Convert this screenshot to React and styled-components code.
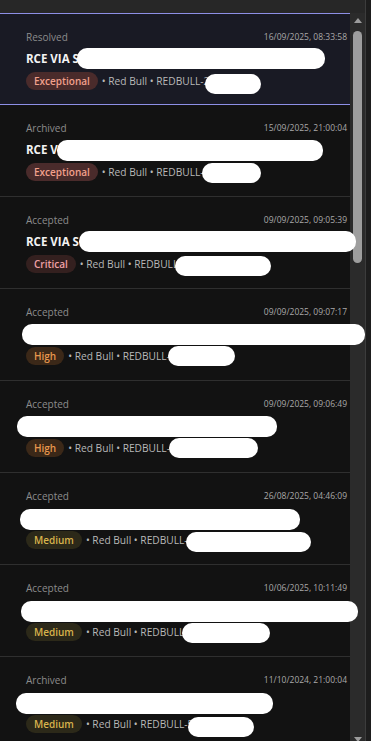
import React from 'react';
import styled, { createGlobalStyle } from 'styled-components';

const GlobalStyle = createGlobalStyle`
  html, body {
    margin: 0;
    padding: 0;
    background: #121212;
    overflow: hidden;
  }
  body {
    font-family: "Open Sans", "Noto Sans", sans-serif;
  }
`;

const Page = styled.div`
  display: flex;
  width: 371px;
  height: 741px;
  overflow: hidden;
`;

const Main = styled.div`
  display: flex;
  flex-direction: column;
  width: 365px;
`;

const TopBar = styled.div`
  height: 13px;
  flex-shrink: 0;
  background: #272727;
`;

const Body = styled.div`
  display: flex;
  flex: 1;
  min-height: 0;
`;

const List = styled.div`
  width: 350px;
  flex-shrink: 0;
  background: #121212;
`;

const Edge = styled.div`
  width: 6px;
  border-left: 1px solid #3c3c3c;
  box-sizing: border-box;
  background: #1d1d1d;
`;

const ScrollTrack = styled.div`
  width: 15px;
  background: #2b2b2b;
  display: flex;
  flex-direction: column;
  align-items: center;
  padding-top: 5px;
  box-sizing: border-box;
`;

const Arrow = styled.div`
  width: 0;
  height: 0;
  border-left: 4.5px solid transparent;
  border-right: 4.5px solid transparent;
  ${p => (p.$down ? 'border-top: 5px solid #9c9c9c;' : 'border-bottom: 5px solid #9c9c9c;')}
`;

const Thumb = styled.div`
  width: 9px;
  height: 232px;
  margin-top: 8px;
  border-radius: 5px;
  background: #9e9e9e;
`;

const Spacer = styled.div`
  flex: 1;
`;

const DownArrow = styled(Arrow)`
  margin-bottom: -1px;
`;

const Card = styled.div`
  padding: 16px 3px 12px 26px;
  height: 92px;
  box-sizing: border-box;
  border-top: ${p => (p.$active ? '1px solid #8d8fe6' : '0')};
  border-bottom: 1px solid ${p => (p.$active ? '#8d8fe6' : '#2f2f2f')};
  background: ${p => (p.$active ? '#191a24' : '#121212')};
  display: flex;
  flex-direction: column;
`;

const TopRow = styled.div`
  display: flex;
  justify-content: space-between;
  align-items: center;
  height: 13px;
`;

const Status = styled.span`
  font-size: 10px;
  color: #8c8c8c;
`;

const Stamp = styled.span`
  font-size: 8.5px;
  color: #a9a9a9;
`;

const Title = styled.div`
  display: flex;
  align-items: center;
  height: 14px;
  margin-top: 8px;
  font-size: 11.5px;
  font-weight: 700;
  color: #f3f3f3;
  white-space: nowrap;
`;

const Meta = styled.div`
  display: flex;
  align-items: center;
  height: 18px;
  margin-top: 7px;
  font-size: 10.2px;
  color: #b8b8b8;
  white-space: nowrap;
`;

const badgeColors = {
  Exceptional: ['#4a2b2b', '#f2a08c'],
  Critical: ['#34201f', '#f1a1a6'],
  High: ['#3b2818', '#e8974d'],
  Medium: ['#2c2919', '#d8b34c'],
};

const Badge = styled.span`
  height: 18px;
  line-height: 18px;
  padding: 0 8px;
  border-radius: 9px;
  font-size: 10px;
  font-weight: 600;
  background: ${p => badgeColors[p.$level][0]};
  color: ${p => badgeColors[p.$level][1]};
  margin-right: 4px;
`;

const Blob = styled.span`
  position: relative;
  z-index: 2;
  display: inline-block;
  flex-shrink: 0;
  height: ${p => p.$h || 20}px;
  width: ${p => p.$w}px;
  margin-left: ${p => p.$ml || 0}px;
  margin-top: ${p => p.$mt || 0}px;
  border-radius: 10px;
  background: #ffffff;
`;

const items = [
  { status: 'Resolved', date: '16/09/2025, 08:33:58', title: 'RCE VIA S', tBlob: [-2, 248, 0], level: 'Exceptional', meta: '• Red Bull • REDBULL-2', mBlob: [-4, 56, 6] },
  { status: 'Archived', date: '15/09/2025, 21:00:04', title: 'RCE V', tBlob: [-1, 266, 2], level: 'Exceptional', meta: '• Red Bull • REDBULL-', mBlob: [-2, 59, 2] },
  { status: 'Accepted', date: '09/09/2025, 09:05:39', title: 'RCE VIA S', tBlob: [0, 277, 0], level: 'Critical', meta: '• Red Bull • REDBULL', mBlob: [-3, 96, 4] },
  { status: 'Accepted', date: '09/09/2025, 09:07:17', title: '', tBlob: [-4, 343, 2], level: 'High', meta: '• Red Bull • REDBULL-', mBlob: [-2, 67, 0] },
  { status: 'Accepted', date: '09/09/2025, 09:06:49', title: '', tBlob: [-9, 260, 2], level: 'High', meta: '• Red Bull • REDBULL-', mBlob: [-1, 89, 0] },
  { status: 'Accepted', date: '26/08/2025, 04:46:09', title: '', tBlob: [-6, 280, 4], level: 'Medium', meta: '• Red Bull • REDBULL-', mBlob: [-2, 125, 4] },
  { status: 'Accepted', date: '10/06/2025, 10:11:49', title: '', tBlob: [-5, 337, 4], level: 'Medium', meta: '• Red Bull • REDBULL', mBlob: [-2, 88, 2] },
  { status: 'Archived', date: '11/10/2024, 21:00:04', title: '', tBlob: [-10, 257, 4], level: 'Medium', meta: '• Red Bull • REDBULL-5', mBlob: [-5, 66, 6] },
];

export default function App() {
  return (
    <Page>
      <GlobalStyle />
      <Main>
        <TopBar />
        <Body>
          <List>
            {items.map((it, i) => (
              <Card key={i} $active={i === 0}>
                <TopRow>
                  <Status>{it.status}</Status>
                  <Stamp>{it.date}</Stamp>
                </TopRow>
                <Title>
                  {it.title}
                  <Blob $ml={it.tBlob[0]} $w={it.tBlob[1]} $mt={it.tBlob[2]} $h={21} />
                </Title>
                <Meta>
                  <Badge $level={it.level}>{it.level}</Badge>
                  {it.meta}
                  <Blob $ml={it.mBlob[0]} $w={it.mBlob[1]} $mt={it.mBlob[2]} $h={20} />
                </Meta>
              </Card>
            ))}
          </List>
          <ScrollTrack>
            <Arrow />
            <Thumb />
            <Spacer />
            <DownArrow $down />
          </ScrollTrack>
        </Body>
      </Main>
      <Edge />
    </Page>
  );
}
